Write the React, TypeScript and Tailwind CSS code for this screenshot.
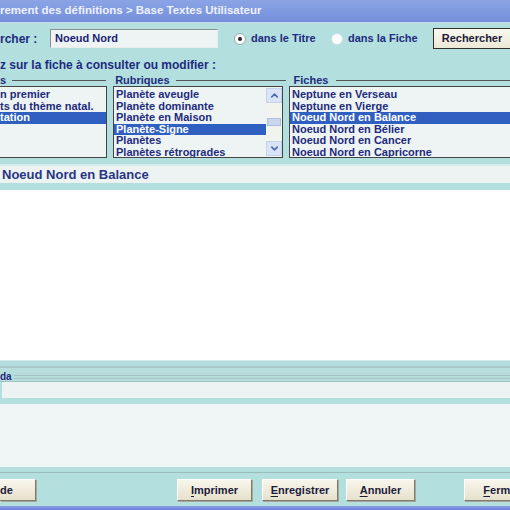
import { ChevronUp, ChevronDown } from "lucide-react";

const font = "font-['Liberation_Sans',Arial,sans-serif]";
const ink = "text-[#1e2b7e]";

const rubriques = [
  "Planète aveugle",
  "Planète dominante",
  "Planète en Maison",
  "Planète-Signe",
  "Planètes",
  "Planètes rétrogrades",
];

const fiches = [
  "Neptune en Verseau",
  "Neptune en Vierge",
  "Noeud Nord en Balance",
  "Noeud Nord en Bélier",
  "Noeud Nord en Cancer",
  "Noeud Nord en Capricorne",
];

const leftItems = ["n premier", "ts du thème natal.", "tation", "", "", ""];

interface ListProps {
  items: string[];
  selected: number;
  pad: string;
}

const ListRows: React.FC<ListProps> = ({ items, selected, pad }) => (
  <div className="flex flex-col pt-[2px]">
    {items.map((it, i) => (
      <div
        key={i}
        className={`h-[11.5px] leading-[11.5px] text-[11px] font-bold whitespace-nowrap ${pad} ${
          i === selected ? "bg-[#2f5fc0] text-white" : ink
        }`}
      >
        {it}
      </div>
    ))}
  </div>
);

const Button: React.FC<{ label: string; width: string }> = ({ label, width }) => (
  <div
    className={`${width} shrink-0 h-[22px] flex items-center justify-center bg-gradient-to-b from-[#f8f6ec] to-[#e6e1cc] border border-t-white border-l-white border-r-[#7d7b70] border-b-[#7d7b70] shadow-[1px_1px_0_#a8a69a] text-[11px] font-bold text-[#1b1b3a] whitespace-nowrap`}
  >
    <span className="underline decoration-1 underline-offset-2">{label[0]}</span>
    <span>{label.slice(1)}</span>
  </div>
);

export default function App() {
  return (
    <div className={`w-[510px] h-[510px] overflow-hidden bg-[#b3dfdf] flex flex-col ${font}`}>
      {/* title bar */}
      <div className="h-[23px] shrink-0 bg-gradient-to-b from-[#8aa4e6] to-[#7590da] border-b border-[#c9d8f2] flex items-center">
        <span className="text-[11.5px] font-bold text-[#eef0ff] whitespace-nowrap">
          rement des définitions &gt; Base Textes Utilisateur
        </span>
      </div>

      {/* search row */}
      <div className="h-[27px] shrink-0 flex items-center pt-[4px] whitespace-nowrap">
        <span className={`w-[50px] shrink-0 text-[12px] font-bold ${ink}`}>rcher :</span>
        <div className="w-[168px] shrink-0 h-[19px] bg-[#eef4f3] border border-t-[#8a8f8f] border-l-[#8a8f8f] border-r-[#e8eeee] border-b-[#e8eeee] flex items-center pl-[4px]">
          <span className="text-[11px] font-bold text-[#1a2275]">Noeud Nord</span>
        </div>
        <div className="ml-[16px] shrink-0 w-[12px] h-[12px] rounded-full bg-white border border-[#9aa] flex items-center justify-center">
          <div className="w-[4px] h-[4px] rounded-full bg-[#222]" />
        </div>
        <span className={`ml-[5px] w-[76px] shrink-0 text-[11px] font-bold ${ink}`}>dans le Titre</span>
        <div className="ml-[4px] shrink-0 w-[12px] h-[12px] rounded-full bg-white border border-[#cde]" />
        <span className={`ml-[5px] w-[82px] shrink-0 text-[11px] font-bold ${ink}`}>dans la Fiche</span>
        <div className="ml-[3px] w-[78px] h-[21px] shrink-0 bg-gradient-to-b from-[#fbf9f0] to-[#ece8d6] border border-[#30302a] border-r-[#222] flex items-center justify-center">
          <span className="text-[11px] font-bold text-[#1b1b3a]">Rechercher</span>
        </div>
      </div>

      {/* instruction */}
      <div className={`h-[24px] shrink-0 flex items-center pt-[6px] text-[12px] font-bold whitespace-nowrap ${ink}`}>
        z sur la fiche à consulter ou modifier :
      </div>

      {/* group labels */}
      <div className="h-[12px] shrink-0 flex items-center text-[11px] font-bold whitespace-nowrap">
        <span className={`${ink}`}>s</span>
        <div className="ml-[6px] w-[94px] h-[1px] bg-[#555]" />
        <span className={`ml-[9px] ${ink}`}>Rubriques</span>
        <div className="ml-[6px] w-[110px] shrink-0 h-[1px] bg-[#555]" />
        <span className={`ml-[8px] ${ink}`}>Fiches</span>
        <div className="ml-[8px] flex-1 h-[1px] bg-[#555]" />
      </div>

      {/* lists */}
      <div className="h-[72px] shrink-0 flex items-start">
        <div className="w-[107px] shrink-0 h-[72px] bg-[#eef4f3] border border-l-0 border-[#444] overflow-hidden">
          <ListRows items={leftItems} selected={2} pad="pl-0" />
        </div>
        <div className="ml-[6px] w-[170px] shrink-0 h-[72px] bg-[#eef4f3] border border-[#444] flex overflow-hidden">
          <div className="flex-1">
            <ListRows items={rubriques} selected={3} pad="pl-[2px]" />
          </div>
          <div className="w-[16px] flex flex-col justify-between bg-[#f1f3ef] py-[1px]">
            <div className="h-[15px] bg-[#d9e4f6] border border-[#c3d3ef] flex items-center justify-center">
              <ChevronUp size={11} strokeWidth={3.5} className="text-[#4d6ab3]" />
            </div>
            <div className="h-[8px] mx-[1px] bg-[#c9d6ee] border border-[#aebfe0]" />
            <div className="h-[15px] bg-[#d9e4f6] border border-[#c3d3ef] flex items-center justify-center">
              <ChevronDown size={11} strokeWidth={3.5} className="text-[#4d6ab3]" />
            </div>
          </div>
        </div>
        <div className="ml-[6px] flex-1 h-[72px] bg-[#eef4f3] border border-r-0 border-[#444] overflow-hidden">
          <ListRows items={fiches} selected={2} pad="pl-[2px]" />
        </div>
      </div>

      {/* title field */}
      <div className="h-[6px] shrink-0" />
      <div className="h-[2px] shrink-0 bg-[#d6ecec]" />
      <div className="h-[17px] shrink-0 bg-[#edf3f3] flex items-center pl-[2px]">
        <span className="text-[13px] font-bold text-[#2a3586]">Noeud Nord en Balance</span>
      </div>
      <div className="h-[7px] shrink-0" />

      {/* text area */}
      <div className="h-[170px] shrink-0 bg-white" />

      {/* stripes */}
      <div className="h-[1px] shrink-0 bg-[#d4ecec]" />
      <div className="h-[5px] shrink-0 bg-[#b3dcdc]" />
      <div className="h-[2px] shrink-0 bg-[#a9c9c9]" />
      <div className="h-[4px] shrink-0 bg-[#b8dede]" />
      <div className="h-[9px] shrink-0 flex items-center bg-[#b6dcdc]">
        <span className={`text-[10px] font-bold ${ink} leading-none`}>da</span>
        <div className="ml-[2px] flex-1 flex flex-col gap-[2px]">
          <div className="h-[1px] bg-[#a3c3c3]" />
          <div className="h-[1px] bg-[#a3c3c3]" />
        </div>
      </div>
      <div className="h-[1px] shrink-0 bg-[#9fc4c4]" />
      <div className="h-[16px] shrink-0 bg-[#edf3f3] border-l-[2px] border-[#b3dfdf]" />
      <div className="h-[6px] shrink-0" />

      {/* lower light area */}
      <div className="h-[63px] shrink-0 bg-[#f0f5f5]" />

      {/* button bar */}
      <div className="h-[5px] shrink-0" />
      <div className="h-[1px] shrink-0 bg-[#9bbcbc]" />
      <div className="h-[6px] shrink-0" />
      <div className="h-[22px] shrink-0 flex items-center">
        <div className="w-[36px] shrink-0 h-[22px] flex items-center justify-start bg-gradient-to-b from-[#f8f6ec] to-[#e6e1cc] border border-t-white border-l-0 border-r-[#7d7b70] border-b-[#7d7b70] shadow-[1px_1px_0_#a8a69a] text-[11px] font-bold text-[#1b1b3a]">
          de
        </div>
        <div className="ml-[141px] shrink-0">
          <Button label="Imprimer" width="w-[75px]" />
        </div>
        <div className="ml-[10px] shrink-0">
          <Button label="Enregistrer" width="w-[76px]" />
        </div>
        <div className="ml-[8px] shrink-0">
          <Button label="Annuler" width="w-[69px]" />
        </div>
        <div className="ml-[49px] shrink-0">
          <Button label="Fermer" width="w-[76px]" />
        </div>
      </div>
      <div className="h-[5px] shrink-0" />
      <div className="flex-1 bg-gradient-to-b from-[#8c9ee6] to-[#6a80d8]" />
    </div>
  );
}
